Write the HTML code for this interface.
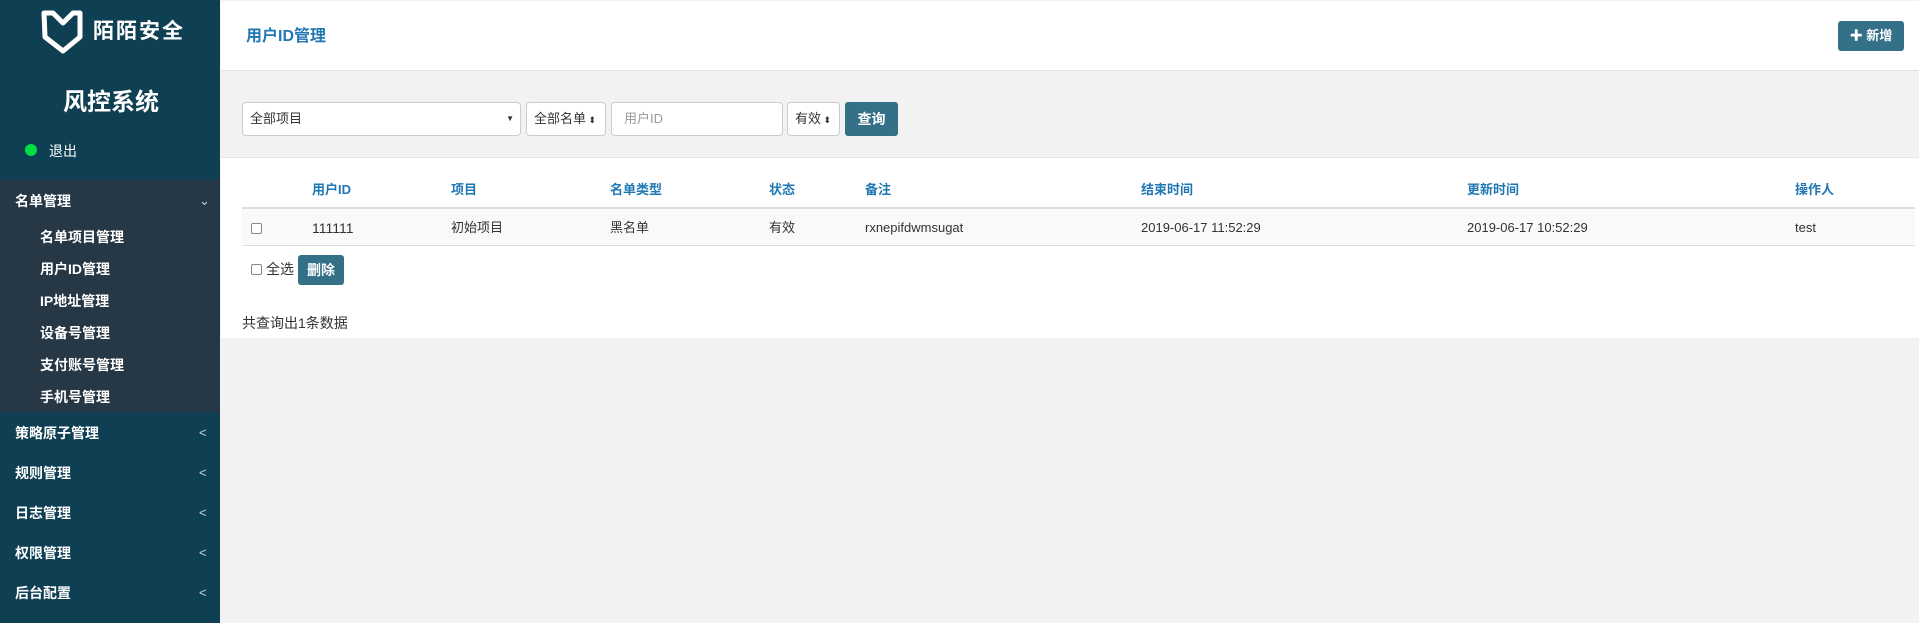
<!DOCTYPE html>
<html><head><meta charset="utf-8"><style>
*{margin:0;padding:0;box-sizing:border-box}
body{width:1919px;height:623px;overflow:hidden;background:#f2f2f2;font-family:"Liberation Sans","Noto Sans CJK SC",sans-serif;font-size:13px;color:#333;position:relative}
.a{position:absolute;white-space:nowrap}
#sb{position:absolute;left:0;top:0;width:220px;height:623px;background:#0e3f52}
#sub{position:absolute;left:0;top:180px;width:220px;height:232px;background:#263746}
.w{color:#fff;font-weight:bold;font-size:14px}
.chev{position:absolute;left:199px;color:#c8d2d8;font-size:13px;line-height:16px}
.ctl{position:absolute;top:102px;height:34px;background:#fff;border:1px solid #ccc;border-radius:4px;font-size:13px;line-height:32px;padding-left:7px}
.btn{position:absolute;background:#357089;color:#fff;border-radius:3px;text-align:center;font-weight:bold}
.th{position:absolute;top:182px;color:#1f77b4;font-weight:bold;font-size:13px;line-height:16px}
.td{position:absolute;top:220px;font-size:13px;line-height:16px;color:#333}
</style></head><body>
<div id="sb"></div>
<div id="sub"></div>
<svg class="a" style="left:41px;top:9px" width="45" height="46" viewBox="0 0 45 46"><path d="M3 4 L12 4 L22 14 L32 4 L39 4 L39 28 L22 42 L4 28 Z" fill="none" stroke="#fff" stroke-width="5" stroke-linejoin="round"/></svg>
<div class="a" style="left:93px;top:15px;color:#fff;font-size:21px;font-weight:bold;letter-spacing:2px">陌陌安全</div>
<div class="a" style="left:63px;top:82px;color:#fff;font-size:24px;font-weight:bold">风控系统</div>
<div class="a" style="left:25px;top:144px;width:12px;height:12px;border-radius:50%;background:#00dd44"></div>
<div class="a w" style="left:49px;top:141px;font-weight:normal;font-size:14px">退出</div>
<div class="a w" style="left:15px;top:191px">名单管理</div><div class="chev" style="top:193px">⌄</div>
<div class="a w" style="left:40px;top:227px">名单项目管理</div>
<div class="a w" style="left:40px;top:259px">用户ID管理</div>
<div class="a w" style="left:40px;top:291px">IP地址管理</div>
<div class="a w" style="left:40px;top:323px">设备号管理</div>
<div class="a w" style="left:40px;top:355px">支付账号管理</div>
<div class="a w" style="left:40px;top:387px">手机号管理</div>
<div class="a w" style="left:15px;top:423px">策略原子管理</div><div class="chev" style="top:425px">&lt;</div>
<div class="a w" style="left:15px;top:463px">规则管理</div><div class="chev" style="top:465px">&lt;</div>
<div class="a w" style="left:15px;top:503px">日志管理</div><div class="chev" style="top:505px">&lt;</div>
<div class="a w" style="left:15px;top:543px">权限管理</div><div class="chev" style="top:545px">&lt;</div>
<div class="a w" style="left:15px;top:583px">后台配置</div><div class="chev" style="top:585px">&lt;</div>

<div class="a" style="left:221px;top:1px;width:1698px;height:70px;background:#fff;border-bottom:1px solid #e4e4e4"></div>
<div class="a" style="left:246px;top:22px;color:#1f77b4;font-size:16px;font-weight:bold">用户ID管理</div>
<div class="btn" style="left:1838px;top:21px;width:66px;height:30px;line-height:30px;font-size:13px">✚ 新增</div>

<div class="ctl" style="left:242px;width:279px">全部项目<span style="position:absolute;right:6px;font-size:8px">▼</span></div>
<div class="ctl" style="left:526px;width:80px">全部名单<span style="font-size:9px"> ⬍</span></div>
<div class="ctl" style="left:611px;width:172px;color:#999;padding-left:12px">用户ID</div>
<div class="ctl" style="left:787px;width:53px">有效<span style="font-size:9px"> ⬍</span></div>
<div class="btn" style="left:845px;top:102px;width:53px;height:34px;line-height:34px;font-size:14px">查询</div>

<div class="a" style="left:221px;top:157px;width:1698px;height:181px;background:#fff;border-top:1px solid #e6e6e6"></div>
<div class="a" style="left:242px;top:207px;width:1673px;height:39px;background:#f9f9f9;border-top:2px solid #ddd;border-bottom:1px solid #ddd"></div>
<div class="th" style="left:312px">用户ID</div>
<div class="th" style="left:451px">项目</div>
<div class="th" style="left:610px">名单类型</div>
<div class="th" style="left:769px">状态</div>
<div class="th" style="left:865px">备注</div>
<div class="th" style="left:1141px">结束时间</div>
<div class="th" style="left:1467px">更新时间</div>
<div class="th" style="left:1795px">操作人</div>
<div class="a" style="left:251px;top:223px;width:11px;height:11px;border:1px solid #888;border-radius:2px;background:#fff"></div>
<div class="td" style="left:312px;font-size:14px">111111</div>
<div class="td" style="left:451px">初始项目</div>
<div class="td" style="left:610px">黑名单</div>
<div class="td" style="left:769px">有效</div>
<div class="td" style="left:865px">rxnepifdwmsugat</div>
<div class="td" style="left:1141px">2019-06-17 11:52:29</div>
<div class="td" style="left:1467px">2019-06-17 10:52:29</div>
<div class="td" style="left:1795px">test</div>
<div class="a" style="left:251px;top:264px;width:11px;height:11px;border:1px solid #888;border-radius:2px;background:#fff"></div>
<div class="a" style="left:266px;top:261px;font-size:14px;line-height:16px">全选</div>
<div class="btn" style="left:298px;top:255px;width:46px;height:30px;line-height:30px;font-size:14px">删除</div>
<div class="a" style="left:242px;top:315px;font-size:14px;line-height:16px">共查询出1条数据</div>
</body></html>
